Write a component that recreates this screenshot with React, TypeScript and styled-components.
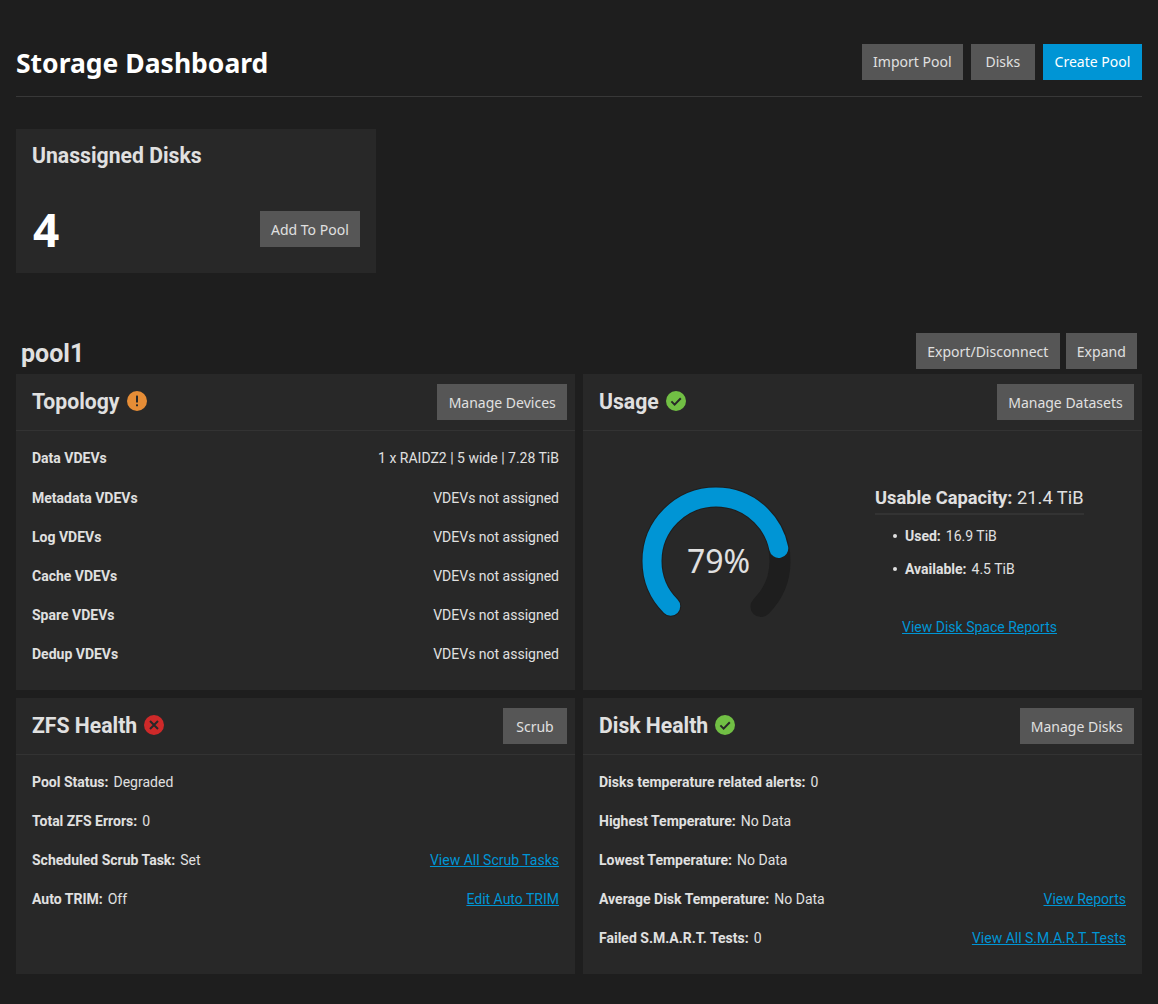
import React from 'react';
import styled, { createGlobalStyle } from 'styled-components';

const GlobalStyle = createGlobalStyle`
  html, body {
    margin: 0;
    background: #1e1e1e;
    color: #e0e0e0;
    font-family: Roboto, "Liberation Sans", sans-serif;
  }
  * { box-sizing: border-box; }
`;

const Page = styled.div`
  width: 1158px;
  height: 1004px;
  padding: 44px 16px 0;
  overflow: hidden;
`;

const PageHeader = styled.header`
  display: flex;
  justify-content: space-between;
  align-items: center;
  height: 53px;
  padding-bottom: 17px;
  border-bottom: 1px solid #383838;
`;

const PageTitle = styled.h1`
  margin: 2px 0 0;
  font-family: "Noto Sans", sans-serif;
  font-size: 26.5px;
  font-weight: 700;
  color: #fff;
`;

const Actions = styled.div<{ $gap?: number }>`
  display: flex;
  gap: ${(p) => p.$gap ?? 8}px;
`;

const Button = styled.button<{ $primary?: boolean }>`
  height: 36px;
  min-width: 64px;
  padding: 0 ${(p) => (p.$primary ? 11.75 : 11.25)}px;
  border: none;
  background: ${(p) => (p.$primary ? '#0095d5' : '#565656')};
  color: ${(p) => (p.$primary ? '#fff' : '#e0e0e0')};
  font-family: "Noto Sans", sans-serif;
  font-size: 14px;
  white-space: nowrap;
`;

const UnassignedCard = styled.section`
  width: 360px;
  height: 144px;
  margin-top: 32px;
  padding: 15px 16px 16px;
  background: #282828;
`;

const CardTitle = styled.h3`
  margin: 0;
  font-size: 21.2px;
  line-height: 24px;
  font-weight: 700;
`;

const CardBody = styled.div`
  display: flex;
  justify-content: space-between;
  align-items: center;
  margin-top: 41px;
`;

const BigCount = styled.span`
  font-family: "Noto Sans", sans-serif;
  font-size: 46px;
  line-height: 40px;
  font-weight: 700;
  color: #fff;
  margin-left: 1px;
`;

const PoolHeader = styled.div`
  display: flex;
  justify-content: space-between;
  align-items: flex-end;
  height: 41px;
  margin-top: 60px;
  padding: 0 5px 5px;
`;

const PoolName = styled.h2`
  margin: 0;
  font-size: 25px;
  line-height: 30px;
  font-weight: 700;
`;

const Grid = styled.div`
  display: grid;
  grid-template-columns: 559px 559px;
  grid-template-rows: 316px 276px;
  gap: 8px;
`;

const Panel = styled.section`
  background: #282828;
`;

const PanelHeader = styled.div`
  display: flex;
  justify-content: space-between;
  align-items: center;
  height: 57px;
  padding: 0 8px 0 16px;
  border-bottom: 1px solid #333;
`;

const PanelTitle = styled.h3`
  display: flex;
  align-items: center;
  gap: 7px;
  margin: 0 0 2px;
  font-size: 21.2px;
  font-weight: 700;
`;

const Rows = styled.div`
  padding: 7px 16px 0;
`;

const Row = styled.div<{ $tall?: boolean }>`
  display: flex;
  justify-content: space-between;
  align-items: center;
  height: 39px;
  font-size: 14px;
  &:first-child {
    margin-bottom: ${(p) => (p.$tall ? 1 : 0)}px;
  }
`;

const Label = styled.b`
  font-weight: 700;
  margin-right: 5px;
`;

const Link = styled.a`
  color: #0095d5;
  text-decoration: underline;
  font-size: 14px;
  cursor: pointer;
`;

const UsageBody = styled.div`
  display: flex;
  padding: 0 0 0 57px;
`;

const Gauge = styled.div`
  position: relative;
  width: 152px;
  height: 152px;
  margin-top: 54px;
`;

const GaugeValue = styled.span`
  position: absolute;
  inset: 0;
  display: flex;
  align-items: center;
  justify-content: center;
  padding: 0 0 2px 5px;
  font-family: "Noto Sans", sans-serif;
  font-size: 32px;
`;

const Capacity = styled.div`
  width: 209px;
  margin: 55px 0 0 83px;
`;

const CapacityTitle = styled.div`
  height: 29px;
  border-bottom: 2px solid #333;
  font-size: 18.3px;
  line-height: 24px;
  white-space: nowrap;
  b {
    font-weight: 700;
  }
`;

const CapacityList = styled.ul`
  list-style: none;
  margin: 4px 0 0;
  padding: 0 0 0 18px;
  font-size: 14px;
  li {
    display: flex;
    align-items: center;
    height: 33px;
  }
  li::before {
    content: '';
    width: 4px;
    height: 4px;
    margin-right: 8px;
    border-radius: 50%;
    background: #e0e0e0;
  }
`;

const CapacityLink = styled.div`
  margin-top: 32px;
  text-align: center;
`;

const StatusIcon = ({ kind }: { kind: 'warn' | 'ok' | 'error' }) => {
  const fill = { warn: '#e68d36', ok: '#71bf44', error: '#ce2929' }[kind];
  return (
    <svg width="20" height="20" viewBox="0 0 20 20">
      <circle cx="10" cy="10" r="10" fill={fill} />
      {kind === 'warn' && (
        <g fill="#282828">
          <rect x="9" y="4.6" width="2" height="7" rx="0.6" />
          <rect x="9" y="13.2" width="2" height="2" rx="0.5" />
        </g>
      )}
      {kind === 'ok' && (
        <path d="M5.4 10.4 8.6 13.6 14.8 7.2" fill="none" stroke="#282828" strokeWidth="2" />
      )}
      {kind === 'error' && (
        <path d="M6 6 14 14M14 6 6 14" fill="none" stroke="#282828" strokeWidth="2" />
      )}
    </svg>
  );
};

const UsageGauge = ({ percent }: { percent: number }) => {
  const r = 64;
  const len = 2 * Math.PI * r * 0.75;
  return (
    <Gauge>
      <svg width="152" height="152" viewBox="0 0 152 152">
        <g transform="rotate(135 76 76)" fill="none" strokeLinecap="round">
          <circle cx="76" cy="76" r={r} stroke="#1e1e1e" strokeWidth="21" strokeDasharray={`${len} 1000`} />
          <circle
            cx="76"
            cy="76"
            r={r}
            stroke="#0095d5"
            strokeWidth="19"
            strokeDasharray={`${(len * percent) / 100} 1000`}
          />
        </g>
      </svg>
      <GaugeValue>{percent}%</GaugeValue>
    </Gauge>
  );
};

const topology = [
  ['Data VDEVs', '1 x RAIDZ2 | 5 wide | 7.28 TiB'],
  ['Metadata VDEVs', 'VDEVs not assigned'],
  ['Log VDEVs', 'VDEVs not assigned'],
  ['Cache VDEVs', 'VDEVs not assigned'],
  ['Spare VDEVs', 'VDEVs not assigned'],
  ['Dedup VDEVs', 'VDEVs not assigned'],
];

const zfsHealth = [
  ['Pool Status:', 'Degraded'],
  ['Total ZFS Errors:', '0'],
  ['Scheduled Scrub Task:', 'Set', 'View All Scrub Tasks'],
  ['Auto TRIM:', 'Off', 'Edit Auto TRIM'],
];

const diskHealth = [
  ['Disks temperature related alerts:', '0'],
  ['Highest Temperature:', 'No Data'],
  ['Lowest Temperature:', 'No Data'],
  ['Average Disk Temperature:', 'No Data', 'View Reports'],
  ['Failed S.M.A.R.T. Tests:', '0', 'View All S.M.A.R.T. Tests'],
];

const StatusRows = ({ rows }: { rows: string[][] }) => (
  <Rows>
    {rows.map(([label, value, link]) => (
      <Row key={label}>
        <span>
          <Label>{label}</Label>
          {value}
        </span>
        {link && <Link>{link}</Link>}
      </Row>
    ))}
  </Rows>
);

export default function App() {
  return (
    <Page>
      <GlobalStyle />
      <PageHeader>
        <PageTitle>Storage Dashboard</PageTitle>
        <Actions>
          <Button>Import Pool</Button>
          <Button>Disks</Button>
          <Button $primary>Create Pool</Button>
        </Actions>
      </PageHeader>

      <UnassignedCard>
        <CardTitle>Unassigned Disks</CardTitle>
        <CardBody>
          <BigCount>4</BigCount>
          <Button>Add To Pool</Button>
        </CardBody>
      </UnassignedCard>

      <PoolHeader>
        <PoolName>pool1</PoolName>
        <Actions $gap={6}>
          <Button>Export/Disconnect</Button>
          <Button>Expand</Button>
        </Actions>
      </PoolHeader>

      <Grid>
        <Panel>
          <PanelHeader>
            <PanelTitle>
              Topology <StatusIcon kind="warn" />
            </PanelTitle>
            <Button>Manage Devices</Button>
          </PanelHeader>
          <Rows>
            {topology.map(([label, value]) => (
              <Row key={label} $tall>
                <Label>{label}</Label>
                <span>{value}</span>
              </Row>
            ))}
          </Rows>
        </Panel>

        <Panel>
          <PanelHeader>
            <PanelTitle>
              Usage <StatusIcon kind="ok" />
            </PanelTitle>
            <Button>Manage Datasets</Button>
          </PanelHeader>
          <UsageBody>
            <UsageGauge percent={79} />
            <Capacity>
              <CapacityTitle>
                <b>Usable Capacity:</b> 21.4 TiB
              </CapacityTitle>
              <CapacityList>
                <li>
                  <Label>Used:</Label>
                  16.9 TiB
                </li>
                <li>
                  <Label>Available:</Label>
                  4.5 TiB
                </li>
              </CapacityList>
              <CapacityLink>
                <Link>View Disk Space Reports</Link>
              </CapacityLink>
            </Capacity>
          </UsageBody>
        </Panel>

        <Panel>
          <PanelHeader>
            <PanelTitle>
              ZFS Health <StatusIcon kind="error" />
            </PanelTitle>
            <Button>Scrub</Button>
          </PanelHeader>
          <StatusRows rows={zfsHealth} />
        </Panel>

        <Panel>
          <PanelHeader>
            <PanelTitle>
              Disk Health <StatusIcon kind="ok" />
            </PanelTitle>
            <Button>Manage Disks</Button>
          </PanelHeader>
          <StatusRows rows={diskHealth} />
        </Panel>
      </Grid>
    </Page>
  );
}
